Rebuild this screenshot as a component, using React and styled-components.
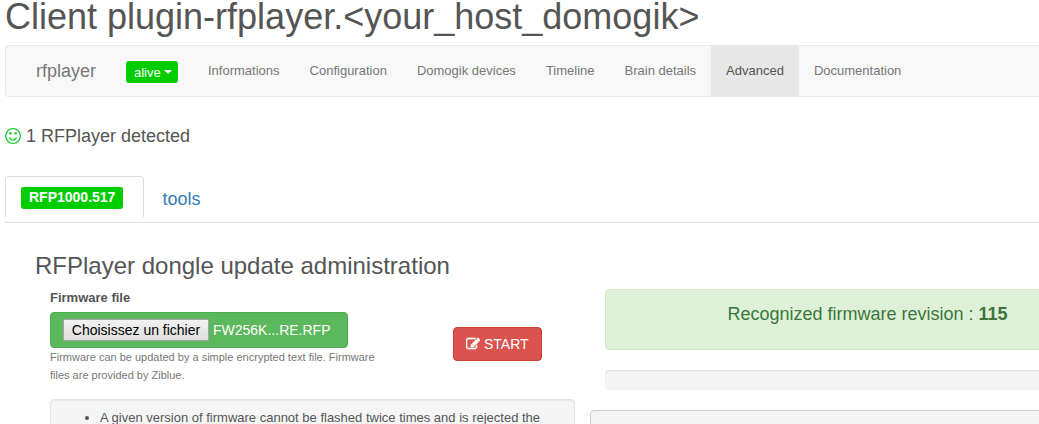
import React, { useState } from "react";
import styled, { createGlobalStyle } from "styled-components";

const GlobalStyle = createGlobalStyle`
  *, *::before, *::after { box-sizing: border-box; }
  body {
    margin: 0;
    background: #fff;
    color: #555;
    font: 13px/18px "Liberation Sans", Arial, sans-serif;
  }
  h1, h2, p, ul { margin: 0; padding: 0; font-weight: 400; }
  button, input { font-family: inherit; }
`;

const Page = styled.div`
  height: 100vh;
  padding-left: 5px;
  overflow: hidden;
`;

const Title = styled.h1`
  height: 45px;
  font-size: 36px;
  line-height: 34px;
`;

const Navbar = styled.nav`
  display: flex;
  align-items: stretch;
  height: 52px;
  padding-left: 30px;
  background: #f8f8f8;
  border: 1px solid #e7e7e7;
  border-right: 0;
  border-radius: 4px 0 0 4px;
`;

const Brand = styled.a`
  align-self: center;
  width: 90px;
  color: #777;
  font-size: 18px;
  line-height: 20px;
  text-decoration: none;
`;

const StatusButton = styled.button`
  display: flex;
  align-items: center;
  gap: 3px;
  align-self: center;
  width: 52px;
  height: 22px;
  margin: 2px 15px 0 0;
  padding: 0 0 0 8px;
  color: #fff;
  background: #00cd00;
  border: 0;
  border-radius: 3px;
  font-size: 13px;
`;

const Caret = styled.span`
  border-top: 4px solid;
  border-left: 4px solid transparent;
  border-right: 4px solid transparent;
`;

const NavLink = styled.a`
  padding: 16px 15px;
  color: ${(p) => (p.$active ? "#555" : "#777")};
  background: ${(p) => (p.$active ? "#e7e7e7" : "transparent")};
  text-decoration: none;
  white-space: nowrap;
`;

const Detected = styled.p`
  display: flex;
  align-items: center;
  gap: 5px;
  padding: 29px 0 30px;
  font-size: 18px;
  line-height: 20px;
`;

const Icon = styled.svg`
  flex: none;
  width: ${(p) => p.$size}px;
  height: ${(p) => p.$size}px;
  fill: ${(p) => p.$color || "currentColor"};
`;

const Tabs = styled.div`
  display: flex;
  align-items: flex-start;
  height: 47px;
  border-bottom: 1px solid #ddd;
`;

const Tab = styled.button`
  height: 41px;
  margin-right: 2px;
  padding: 4px 15px 0;
  color: #337ab7;
  background: transparent;
  border: 1px solid ${(p) => (p.$active ? "#ddd" : "transparent")};
  border-bottom: 0;
  border-radius: 4px 4px 0 0;
  font-size: 18px;
  line-height: 20px;
`;

const Badge = styled.span`
  display: block;
  margin: 0 5px 2px 0;
  padding: 0 8px 2px;
  color: #fff;
  background: #00cd00;
  border-radius: 3px;
  font-size: 14px;
  font-weight: 700;
  line-height: 20px;
`;

const Panel = styled.section`
  padding: 30px 0 0 30px;
`;

const PanelTitle = styled.h2`
  font-size: 24px;
  line-height: 26px;
`;

/* The panel runs on past the right edge of the window. */
const Columns = styled.div`
  display: grid;
  grid-template-columns: 555px minmax(0, 1fr);
  margin-right: -106px;
`;

const UpdateColumn = styled.div`
  padding: 10px 15px 0;
`;

const UpdateForm = styled.form`
  display: grid;
  grid-template-columns: 328px auto;
  column-gap: 75px;
  justify-content: start;
`;

const FieldLabel = styled.label`
  display: block;
  margin-bottom: 5px;
  font-weight: 700;
`;

const FilePicker = styled.label`
  position: relative;
  display: inline-flex;
  align-items: center;
  gap: 4px;
  width: 298px;
  height: 36px;
  padding: 0 12px;
  color: #fff;
  background: #5cb85c;
  border: 1px solid #4cae4c;
  border-radius: 4px;
  font-size: 14px;
  line-height: 20px;
  white-space: nowrap;
`;

const FileInput = styled.input`
  position: absolute;
  inset: 0;
  width: 100%;
  height: 100%;
  opacity: 0;
`;

const ChooseFile = styled.span`
  width: 146px;
  color: #000;
  text-align: center;
  background: linear-gradient(#f2f2f2, #dedede);
  border: 1px solid #a3a3a3;
`;

const Help = styled.p`
  color: #777;
  font-size: 11px;
`;

const StartButton = styled.button`
  display: flex;
  align-items: center;
  gap: 4px;
  height: 34px;
  margin-top: 38px;
  padding: 0 12px;
  color: #fff;
  background: #d9534f;
  border: 1px solid #d43f3a;
  border-radius: 4px;
  font-size: 14px;
`;

const Well = styled.div`
  background: #f5f5f5;
  border: 1px solid ${(p) => p.$border || "#e3e3e3"};
  border-radius: 4px;
  box-shadow: ${(p) => (p.$border ? "none" : "inset 0 1px 1px rgba(0, 0, 0, 0.05)")};
`;

const Notes = styled(Well)`
  margin-top: 15px;
  padding: 9px 9px 9px 49px;
`;

const StateColumn = styled.div`
  padding-top: 10px;
`;

const Revision = styled.p`
  height: 61px;
  margin: 0 15px 20px;
  padding-top: 14px;
  color: #3c763d;
  background: #dff0d8;
  border: 1px solid #d6e9c6;
  border-radius: 4px;
  font-size: 18px;
  line-height: 20px;
  text-align: center;
`;

const Progress = styled.div`
  height: 20px;
  margin: 0 15px 20px;
  background: #f5f5f5;
  border-radius: 4px;
  box-shadow: inset 0 1px 2px rgba(0, 0, 0, 0.1);
`;

const Log = styled(Well)`
  height: 50px;
`;

const NAV = [
  "Informations",
  "Configuration",
  "Domogik devices",
  "Timeline",
  "Brain details",
  "Advanced",
  "Documentation",
];

function SmileIcon() {
  return (
    <Icon viewBox="128 128 1536 1536" $size={16} $color="#1fcf2f" aria-hidden="true">
      <path d="M1262 1075q-37 121-138 195t-228 74-228-74-138-195q-8-25 4-48.5t38-31.5q25-8 48.5 4t31.5 38q25 80 92.5 129.5t151.5 49.5 151.5-49.5 92.5-129.5q8-26 32-38t49-4 37 31.5 4 48.5zm-494-435q0 53-37.5 90.5t-90.5 37.5-90.5-37.5-37.5-90.5 37.5-90.5 90.5-37.5 90.5 37.5 37.5 90.5zm512 0q0 53-37.5 90.5t-90.5 37.5-90.5-37.5-37.5-90.5 37.5-90.5 90.5-37.5 90.5 37.5 37.5 90.5zm256 256q0-130-51-248.5t-136.5-204-204-136.5-248.5-51-248.5 51-204 136.5-136.5 204-51 248.5 51 248.5 136.5 204 204 136.5 248.5 51 248.5-51 204-136.5 136.5-204 51-248.5zm128 0q0 209-103 385.5t-279.5 279.5-385.5 103-385.5-103-279.5-279.5-103-385.5 103-385.5 279.5-279.5 385.5-103 385.5 103 279.5 279.5 103 385.5z" />
    </Icon>
  );
}

function EditIcon() {
  return (
    <Icon viewBox="0 0 1792 1792" $size={14} stroke="currentColor" strokeWidth="90" aria-hidden="true">
      <path d="M888 1184l116-116-152-152-116 116v56h96v96h56zm440-720q-16-16-33 1l-350 350q-17 17-1 33t33-1l350-350q17-17 1-33zm80 594v190q0 119-84.5 203.5t-203.5 84.5h-832q-119 0-203.5-84.5t-84.5-203.5v-832q0-119 84.5-203.5t203.5-84.5h832q63 0 117 25 15 7 18 23 3 17-9 29l-49 49q-14 14-32 8-23-6-45-6h-832q-66 0-113 47t-47 113v832q0 66 47 113t113 47h832q66 0 113-47t47-113v-126q0-13 9-22l64-64q15-15 35-7t20 29zm-96-738l288 288-672 672h-288v-288zm444 132l-92 92-288-288 92-92q28-28 68-28t68 28l152 152q28 28 28 68t-28 68z" />
    </Icon>
  );
}

export default function App() {
  const [fileName, setFileName] = useState("FW256K...RE.RFP");
  return (
    <Page>
      <GlobalStyle />
      <Title>Client plugin-rfplayer.&lt;your_host_domogik&gt;</Title>
      <Navbar>
        <Brand href="#">rfplayer</Brand>
        <StatusButton type="button">
          alive
          <Caret />
        </StatusButton>
        {NAV.map((name) => (
          <NavLink key={name} href="#" $active={name === "Advanced"}>
            {name}
          </NavLink>
        ))}
      </Navbar>
      <Detected>
        <SmileIcon />1 RFPlayer detected
      </Detected>
      <Tabs role="tablist">
        <Tab type="button" role="tab" aria-selected="true" $active>
          <Badge>RFP1000.517</Badge>
        </Tab>
        <Tab type="button" role="tab" aria-selected="false">
          tools
        </Tab>
      </Tabs>
      <Panel>
        <PanelTitle>RFPlayer dongle update administration</PanelTitle>
        <Columns>
          <UpdateColumn>
            <UpdateForm onSubmit={(e) => e.preventDefault()}>
              <div>
                <FieldLabel htmlFor="firmware">Firmware file</FieldLabel>
                <FilePicker>
                  <FileInput
                    id="firmware"
                    type="file"
                    onChange={(e) => e.target.files[0] && setFileName(e.target.files[0].name)}
                  />
                  <ChooseFile>Choisissez un fichier</ChooseFile>
                  {fileName}
                </FilePicker>
                <Help>
                  Firmware can be updated by a simple encrypted text file. Firmware files are
                  provided by Ziblue.
                </Help>
              </div>
              <div>
                <StartButton type="submit">
                  <EditIcon />
                  START
                </StartButton>
              </div>
            </UpdateForm>
            <Notes>
              <ul>
                <li>A given version of firmware cannot be flashed twice times and is rejected the</li>
              </ul>
            </Notes>
          </UpdateColumn>
          <StateColumn>
            <Revision>
              Recognized firmware revision : <strong>115</strong>
            </Revision>
            <Progress role="progressbar" aria-label="Update progress" />
            <Log $border="#ccc" />
          </StateColumn>
        </Columns>
      </Panel>
    </Page>
  );
}
